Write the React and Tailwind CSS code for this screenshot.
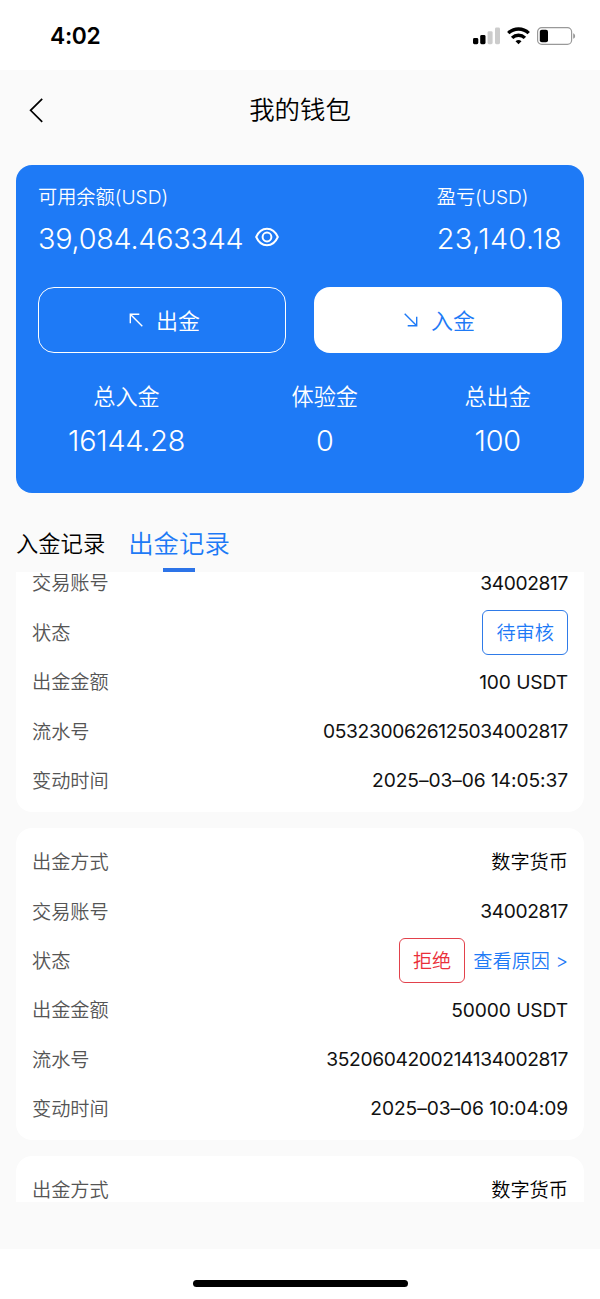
function StatusBar() {
  return (
    <div className="flex h-[70px] shrink-0 items-center justify-between bg-white pt-[2px] pr-6 pl-[50px]">
      <span className="text-[22.8px] leading-none font-semibold tracking-[-0.3px] text-black">4:02</span>
      <div className="flex items-center gap-[7px]">
        <svg width="27" height="18" viewBox="0 0 27 18">
          <rect x="0" y="11" width="5.3" height="6.2" rx="1.4" fill="#000" />
          <rect x="7.2" y="8" width="5.3" height="9.2" rx="1.4" fill="#000" />
          <rect x="14.6" y="4.2" width="5" height="13" rx="1.4" fill="#ccc" />
          <rect x="22" y="0.5" width="5" height="16.7" rx="1.4" fill="#ccc" />
        </svg>
        <svg width="23" height="18" viewBox="0 0 23 18" fill="none" stroke="#000" strokeWidth="3.4">
          <path d="M1.3 6.1A14.6 14.6 0 0 1 21.7 6.1" />
          <path d="M5.1 10.9A9.2 9.2 0 0 1 17.9 10.9" />
          <path d="M11.5 17.2L8.5 14.3A4.6 4.6 0 0 1 14.5 14.3Z" fill="#000" stroke="none" />
        </svg>
        <svg width="39" height="18" viewBox="0 0 39 18">
          <rect x="0.6" y="0.6" width="34" height="16.8" rx="4.2" fill="#fff" stroke="#999" strokeWidth="1.2" />
          <rect x="2.8" y="2.8" width="8.2" height="12.4" rx="2" fill="#000" />
          <path d="M36.2 6.2V11.8C38.8 10.8 38.8 7.2 36.2 6.2Z" fill="#999" />
        </svg>
      </div>
    </div>
  );
}

function Header() {
  return (
    <header className="grid h-[79px] shrink-0 grid-cols-[1fr_auto_1fr] items-center px-7">
      <svg width="17" height="26" viewBox="0 0 17 26" fill="none" stroke="#000" strokeWidth="1.7">
        <path d="M14.2 1.8L2.6 13.3L14.2 24.8" />
      </svg>
      <h1 className="text-[25.4px] leading-none font-[350] text-black">我的钱包</h1>
      <span />
    </header>
  );
}

function Stat({ label, value }) {
  return (
    <div className="flex flex-col items-center">
      <span className="text-[22.2px] leading-8">{label}</span>
      <span className="mt-3 text-[28.8px] leading-8 font-light tracking-[-0.2px]">{value}</span>
    </div>
  );
}

function WalletCard() {
  return (
    <section className="mx-4 mt-4 h-[328px] shrink-0 rounded-2xl bg-[#1e7af6] px-[22px] pt-[18px] font-[350] text-white">
      <div className="flex justify-between">
        <div>
          <div className="text-[19.2px] leading-7">可用余额(USD)</div>
          <div className="mt-3 flex items-center gap-3">
            <span className="text-[28.8px] leading-8 font-light tracking-[-0.25px]">39,084.463344</span>
            <svg width="24" height="20" viewBox="0 0 24 20" fill="none" stroke="#fff" strokeWidth="2" className="mb-1">
              <path d="M1.2 10C6 -1 18 -1 22.8 10C18 21 6 21 1.2 10Z" />
              <circle cx="12" cy="10" r="4.4" />
            </svg>
          </div>
        </div>
        <div>
          <div className="text-[19.2px] leading-7">盈亏(USD)</div>
          <div className="mt-3 text-[28.8px] leading-8 font-light tracking-[0.45px]">23,140.18</div>
        </div>
      </div>
      <div className="mt-8 grid grid-cols-2 gap-7">
        <button className="flex h-[66px] items-center justify-center gap-3 rounded-2xl border-[1.5px] border-white pl-1 text-[22px]">
          <svg width="16" height="16" viewBox="0 0 16 16" fill="none" stroke="currentColor" strokeWidth="1.4">
            <path d="M14.3 14.3L2.3 2.3M2.3 11.3V2.3H11.3" />
          </svg>
          <span className="pt-0.5">出金</span>
        </button>
        <button className="flex h-[66px] items-center justify-center gap-3 rounded-2xl bg-white pl-0.5 text-[22px] text-[#1e7af6]">
          <svg width="16" height="16" viewBox="0 0 16 16" fill="none" stroke="currentColor" strokeWidth="1.4">
            <path d="M1.7 1.7L13.7 13.7M13.7 4.7V13.7H4.7" />
          </svg>
          <span className="pt-0.5">入金</span>
        </button>
      </div>
      <div className="mt-7 flex justify-between pr-[31px] pl-[30px]">
        <Stat label="总入金" value="16144.28" />
        <Stat label="体验金" value="0" />
        <Stat label="总出金" value="100" />
      </div>
    </section>
  );
}

function Tabs() {
  return (
    <nav className="flex h-[79px] shrink-0 items-end gap-[23px] px-4 font-[350]">
      <div className="flex h-[60px] items-center pt-[4px] text-[22.3px] leading-none text-black">入金记录</div>
      <div className="flex h-[60px] flex-col items-center text-[25.4px] leading-none text-[#1e7af6]">
        <span className="flex h-[56px] items-center pt-[7px]">出金记录</span>
        <span className="h-1 w-8 bg-[#2d74e8]" />
      </div>
    </nav>
  );
}

function Row({ label, children }) {
  return (
    <div className="flex h-[49.4px] shrink-0 items-center justify-between text-[19.2px] leading-7">
      <span className="pt-[1.5px] font-[350] text-[#555]">{label}</span>
      <span className="flex items-center text-[#111]">{children}</span>
    </div>
  );
}

function Status({ rejected }) {
  if (!rejected) {
    return (
      <span className="flex h-[45px] items-center rounded-md border-[1.5px] border-[#2f7be8] px-[13px] pt-0.5 font-[350] text-[#1e7af6]">
        待审核
      </span>
    );
  }
  return (
    <>
      <span className="mr-2 flex h-[45px] items-center rounded-md border-[1.5px] border-[#e2414b] px-[13px] pt-0.5 font-[350] text-[#ea2f3a]">
        拒绝
      </span>
      <span className="pt-[1.5px] font-[350] text-[#1e7af6]">查看原因 &gt;</span>
    </>
  );
}

function MethodRow() {
  return <Row label="出金方式"><span className="pt-[1.5px] font-[350] text-black">数字货币</span></Row>;
}

function RecordDetails({ record }) {
  return (
    <>
      <Row label="交易账号"><span className="tracking-[-0.36px]">34002817</span></Row>
      <Row label="状态"><Status rejected={record.rejected} /></Row>
      <Row label="出金金额"><span className="tracking-[-0.1px]">{record.amount}</span></Row>
      <Row label="流水号"><span className="tracking-[-0.36px]">{record.serial}</span></Row>
      <Row label="变动时间"><span className="tracking-[-0.08px]">{record.time}</span></Row>
    </>
  );
}

const pending = { rejected: false, amount: "100 USDT", serial: "0532300626125034002817", time: "2025–03–06 14:05:37" };
const rejected = { rejected: true, amount: "50000 USDT", serial: "3520604200214134002817", time: "2025–03–06 10:04:09" };

export default function App() {
  return (
    <div className="flex h-[1299px] w-[600px] flex-col bg-[#fafafa] font-['Inter','Noto_Sans_CJK_SC',sans-serif]">
      <StatusBar />
      <Header />
      <WalletCard />
      <Tabs />
      <div className="mx-4 flex h-[630px] shrink-0 flex-col gap-4">
        <article className="flex h-[240px] shrink-0 flex-col justify-end rounded-b-2xl bg-white px-4 pb-[7px]">
          <RecordDetails record={pending} />
        </article>
        <article className="h-[312px] shrink-0 rounded-2xl bg-white px-4 pt-[8.8px]">
          <MethodRow />
          <RecordDetails record={rejected} />
        </article>
        <article className="h-[46px] shrink-0 rounded-t-2xl bg-white px-4 pt-[8.8px]">
          <MethodRow />
        </article>
      </div>
      <div className="mt-auto flex h-[50px] shrink-0 justify-center bg-white pt-[31px]">
        <div className="h-[7px] w-[215px] rounded-full bg-black" />
      </div>
    </div>
  );
}
